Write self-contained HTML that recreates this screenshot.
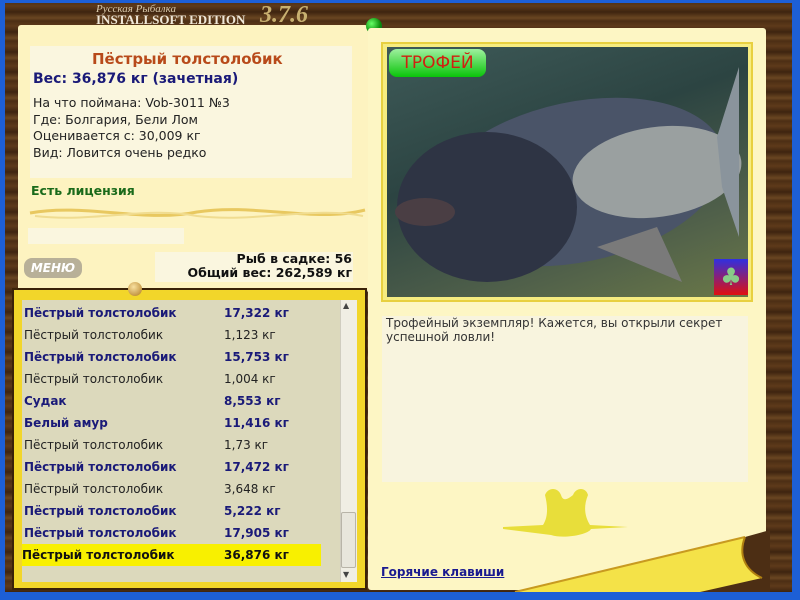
<!DOCTYPE html>
<html><head><meta charset="utf-8"><style>
*{margin:0;padding:0;box-sizing:border-box}
body{width:800px;height:600px;overflow:hidden;background:#1d5fd6;position:relative;font-family:"DejaVu Sans","Liberation Sans",sans-serif}
.a{position:absolute}
#wood{left:5px;top:3px;width:787px;height:589px;background:repeating-linear-gradient(0deg,#3e2410 0,#5e3a1a 6px,#4c2e14 11px,#6a4622 14px,#3e2410 20px)}
.t{font-size:12.5px;color:#222;white-space:nowrap}
.row{position:absolute;left:24px;width:296px;height:22px;font-size:12px;line-height:22px;white-space:nowrap}
.row b{position:absolute;left:0}
.row span{position:absolute;left:200px}
.bd{font-weight:bold;color:#1a1a78}
.nm{color:#222}
</style></head><body>
<div id="wood" class="a"></div>
<div class="a" style="left:96px;top:3px;font-family:'Liberation Serif',serif;font-style:italic;font-size:11px;color:#d8c8a8">Русская Рыбалка</div>
<div class="a" style="left:96px;top:12px;font-family:'Liberation Serif',serif;font-weight:bold;font-size:13px;color:#f0e8d8">INSTALLSOFT EDITION</div>
<div class="a" style="left:260px;top:2px;font-family:'Liberation Serif',serif;font-style:italic;font-weight:bold;font-size:24px;color:#c8b070">3.7.6</div>
<!-- left top paper -->
<div class="a" style="left:18px;top:25px;width:350px;height:268px;background:#fdf3c0;border-radius:3px"></div>
<div class="a" style="left:30px;top:46px;width:322px;height:132px;background:#faf6df"></div>
<div class="a" style="left:28px;top:228px;width:156px;height:16px;background:#faf6df"></div>
<div class="a" style="left:155px;top:252px;width:198px;height:30px;background:#faf6df"></div>
<div class="a" style="left:92px;top:50px;font-size:15px;font-weight:bold;color:#b84a1a">Пёстрый толстолобик</div>
<div class="a" style="left:33px;top:71px;font-size:14px;font-weight:bold;color:#1a1a78">Вес: 36,876 кг (зачетная)</div>
<div class="a t" style="left:33px;top:95px;line-height:16.5px">На что поймана: Vob-3011 №3<br>Где: Болгария, Бели Лом<br>Оценивается с: 30,009 кг<br>Вид: Ловится очень редко</div>
<div class="a" style="left:31px;top:183px;font-size:12.5px;font-weight:bold;color:#1a6a1a">Есть лицензия</div>
<svg class="a" style="left:25px;top:198px" width="345" height="30"><path d="M5 15 C60 5 120 25 172 14 C230 5 290 25 340 12" stroke="#e8c860" stroke-width="3" fill="none"/><path d="M10 18 C70 25 120 8 172 18 C230 25 290 8 338 18" stroke="#f0dc90" stroke-width="2" fill="none"/></svg>
<div class="a" style="left:24px;top:258px;width:58px;height:20px;border-radius:8px;background:#b8b098;color:#fff;font-weight:bold;font-size:12px;text-align:center;line-height:20px;font-style:italic">МЕНЮ</div>
<div class="a" style="left:150px;top:252px;width:202px;text-align:right;font-size:12.5px;font-weight:bold;color:#111;line-height:14px">Рыб в садке: 56<br>Общий вес: 262,589 кг</div>
<div class="a" style="left:366px;top:18px;width:16px;height:16px;border-radius:50%;background:radial-gradient(circle at 35% 35%,#6f6,#0a8a0a 60%,#064)"></div>
<!-- list paper -->
<div class="a" style="left:12px;top:288px;width:355px;height:302px;background:#f2d62a;border:2px solid #3a2208"></div>
<div class="a" style="left:22px;top:300px;width:318px;height:282px;background:#dcd9bc"></div>
<div class="a" style="left:128px;top:282px;width:14px;height:14px;border-radius:50%;background:radial-gradient(circle at 40% 35%,#f8e0a0,#b07a20)"></div>
<div class="a" style="left:340px;top:300px;width:17px;height:282px;background:#f0eee4;border-left:1px solid #d0cdc0"></div>
<div class="a" style="left:341px;top:512px;width:15px;height:56px;background:#e8e6dc;border:1px solid #b8b4a8;border-radius:2px"></div>
<div class="a" style="left:343px;top:301px;font-size:8px;color:#444">▲</div>
<div class="a" style="left:343px;top:570px;font-size:8px;color:#444">▼</div>
<div class="row bd" style="top:302px"><b>Пёстрый толстолобик</b><span>17,322 кг</span></div>
<div class="row nm" style="top:324px"><b style="font-weight:normal">Пёстрый толстолобик</b><span>1,123 кг</span></div>
<div class="row bd" style="top:346px"><b>Пёстрый толстолобик</b><span>15,753 кг</span></div>
<div class="row nm" style="top:368px"><b style="font-weight:normal">Пёстрый толстолобик</b><span>1,004 кг</span></div>
<div class="row bd" style="top:390px"><b>Судак</b><span>8,553 кг</span></div>
<div class="row bd" style="top:412px"><b>Белый амур</b><span>11,416 кг</span></div>
<div class="row nm" style="top:434px"><b style="font-weight:normal">Пёстрый толстолобик</b><span>1,73 кг</span></div>
<div class="row bd" style="top:456px"><b>Пёстрый толстолобик</b><span>17,472 кг</span></div>
<div class="row nm" style="top:478px"><b style="font-weight:normal">Пёстрый толстолобик</b><span>3,648 кг</span></div>
<div class="row bd" style="top:500px"><b>Пёстрый толстолобик</b><span>5,222 кг</span></div>
<div class="row bd" style="top:522px"><b>Пёстрый толстолобик</b><span>17,905 кг</span></div>
<div class="row" style="top:544px;background:#f8f000;font-weight:bold;color:#111;left:22px;width:299px;padding-left:2px"><b>Пёстрый толстолобик</b><span style="left:202px">36,876 кг</span></div>
<!-- right paper -->
<div class="a" style="left:368px;top:28px;width:398px;height:562px;background:#fdf6c4;border-radius:3px"></div>
<svg class="a" style="left:500px;top:520px" width="270" height="72"><path d="M15 72 L245 17 L270 10 L270 72 Z" fill="#4c2e14"/><path d="M15 72 L245 17 C238 35 245 50 262 58 L200 72 Z" fill="#f4e248"/><path d="M15 72 L245 17" stroke="#c89a20" stroke-width="2"/><path d="M245 17 C238 35 245 50 262 58" stroke="#b08010" stroke-width="2" fill="none"/></svg>
<div class="a" style="left:381px;top:42px;width:372px;height:260px;background:#f6ec80;border:2px solid #e8d040"></div>
<div class="a" style="left:387px;top:47px;width:361px;height:250px;background:linear-gradient(160deg,#3e5a58,#2c4442 40%,#50604a 75%,#6a7848)"></div>
<svg class="a" style="left:387px;top:47px" width="361" height="250"><ellipse cx="190" cy="135" rx="150" ry="80" fill="#4a5468" transform="rotate(-12 190 135)"/><ellipse cx="270" cy="125" rx="85" ry="45" fill="#9aa0a0" transform="rotate(-8 270 125)"/><ellipse cx="100" cy="160" rx="90" ry="75" fill="#2e3444"/><ellipse cx="38" cy="165" rx="30" ry="14" fill="#4a3e44"/><path d="M330 90 L352 20 L352 190 L335 140Z" fill="#8a949c"/><path d="M210 200 L295 235 L270 180Z" fill="#7a7a7a"/></svg>
<div class="a" style="left:389px;top:49px;width:97px;height:28px;border-radius:8px;background:linear-gradient(#9ef09e,#0ac40a);color:#d02010;font-size:17px;line-height:28px;text-align:center">ТРОФЕЙ</div>
<div class="a" style="left:714px;top:259px;width:34px;height:36px;background:linear-gradient(#3030e0,#e01010);color:#8c8;font-size:24px;text-align:center;line-height:36px">♣</div>
<div class="a" style="left:382px;top:316px;width:366px;height:166px;background:#f8f4de"></div>
<div class="a t" style="left:386px;top:316px;line-height:14px;color:#333;font-size:12px">Трофейный экземпляр! Кажется, вы открыли секрет<br>успешной ловли!</div>
<svg class="a" style="left:503px;top:487px" width="130" height="60"><path d="M0 40 L40 38 C45 30 45 20 42 8 C45 0 55 0 58 8 C60 15 65 12 70 8 C73 0 83 0 85 8 C80 20 82 30 87 38 L125 40 L88 42 C85 48 60 52 48 48 L0 42Z" fill="#e8de3a"/></svg>
<div class="a" style="left:381px;top:565px;font-size:12px;font-weight:bold;color:#1a1a90;text-decoration:underline">Горячие клавиши</div>
</body></html>
